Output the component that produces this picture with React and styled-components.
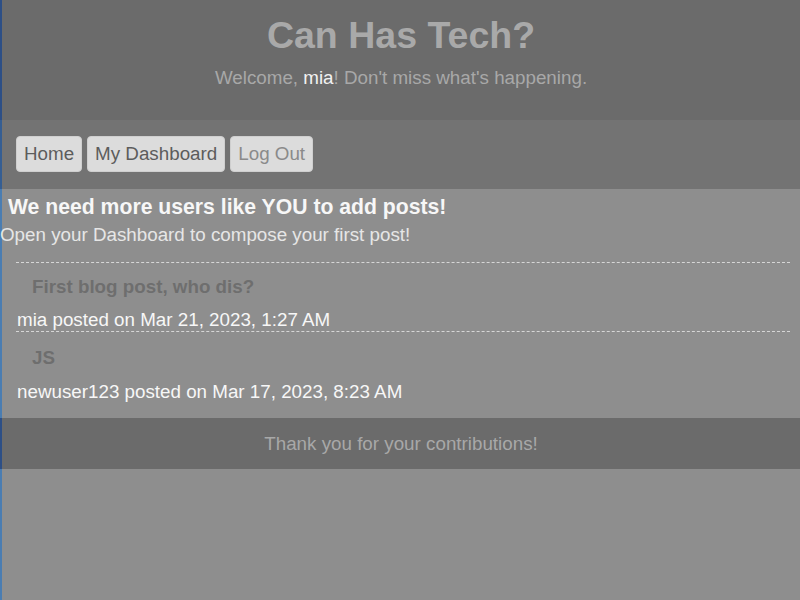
import React from "react";
import styled, { createGlobalStyle } from "styled-components";

const posts = [
  {
    id: 1,
    title: "First blog post, who dis?",
    author: "mia",
    date: "Mar 21, 2023, 1:27 AM",
  },
  {
    id: 2,
    title: "JS",
    author: "newuser123",
    date: "Mar 17, 2023, 8:23 AM",
  },
];

function App() {
  return (
    <>
      <GlobalStyle />
      <Page>
        <Header>
          <Title>Can Has Tech?</Title>
          <Welcome>
            Welcome, <UserName>mia</UserName>! Don't miss what's happening.
          </Welcome>
        </Header>
        <Nav>
          <NavButton>Home</NavButton>
          <NavButton>My Dashboard</NavButton>
          <NavButton $muted>Log Out</NavButton>
        </Nav>
        <Main>
          <Notice>We need more users like YOU to add posts!</Notice>
          <Hint>Open your Dashboard to compose your first post!</Hint>
          <PostList>
            {posts.map((post) => (
              <Post key={post.id}>
                <PostTitle>{post.title}</PostTitle>
                <PostMeta>
                  {post.author} posted on {post.date}
                </PostMeta>
              </Post>
            ))}
          </PostList>
        </Main>
        <Footer>Thank you for your contributions!</Footer>
      </Page>
    </>
  );
}

export default App;

const GlobalStyle = createGlobalStyle`
  html, body {
    margin: 0;
    padding: 0;
    background: #8e8e8e;
  }
  body {
    font-family: "Liberation Sans", Arial, sans-serif;
  }
`;

const Page = styled.div`
  min-height: 600px;
  background: #8e8e8e;
  border-left: 2px solid #4a7db2;
  display: flex;
  flex-direction: column;
`;

const Header = styled.header`
  height: 120px;
  background: #6b6b6b;
  box-shadow: -2px 0 0 #2d4f86;
  display: flex;
  flex-direction: column;
  align-items: center;
  padding-top: 14px;
  box-sizing: border-box;
`;

const Title = styled.h1`
  margin: 0;
  font-size: 37.5px;
  font-weight: 700;
  color: #a9a9a9;
  line-height: 42px;
`;

const Welcome = styled.p`
  margin: 11px 0 0;
  font-size: 18.8px;
  color: #a8a8a8;
  line-height: 22px;
`;

const UserName = styled.span`
  color: #f2f2f2;
`;

const Nav = styled.nav`
  height: 69px;
  background: #737373;
  box-shadow: -2px 0 0 #355e93;
  display: flex;
  align-items: flex-start;
  gap: 5px;
  padding: 16px 14px 0;
  box-sizing: border-box;
`;

const NavButton = styled.button`
  font-family: "Liberation Sans", Arial, sans-serif;
  font-size: 18.8px;
  height: 36px;
  padding: 0 7px;
  border: 1px solid #cfcfcf;
  border-radius: 4px;
  background: #dcdcdc;
  color: ${({ $muted }) => ($muted ? "#8a8a8a" : "#5c5c5c")};
`;

const Main = styled.main`
  background: #8e8e8e;
  padding: 6px 0 15px;
`;

const Notice = styled.h2`
  margin: 0 0 0 6px;
  font-size: 21.2px;
  font-weight: 700;
  color: #f7f7f7;
  line-height: 24px;
`;

const Hint = styled.p`
  margin: 5px 0 0 -2px;
  font-size: 18.8px;
  color: #e6e6e6;
  line-height: 22px;
`;

const PostList = styled.div`
  margin: 16px 10px 0 14px;
`;

const Post = styled.article`
  border-top: 1px dashed #d6d6d6;
  & + & h3 {
    padding-top: 15px;
  }
  & + & p {
    margin-top: 12px;
  }
`;

const PostTitle = styled.h3`
  margin: 0;
  padding: 13px 0 0 16px;
  font-size: 18.8px;
  font-weight: 700;
  color: #6e6e6e;
  line-height: 22px;
`;

const PostMeta = styled.p`
  margin: 11px 0 0 1px;
  font-size: 18.8px;
  color: #f7f7f7;
  line-height: 22px;
`;

const Footer = styled.footer`
  height: 51px;
  background: #6b6b6b;
  box-shadow: -2px 0 0 #2d4f86;
  display: flex;
  align-items: center;
  justify-content: center;
  font-size: 18.8px;
  color: #a8a8a8;
`;
